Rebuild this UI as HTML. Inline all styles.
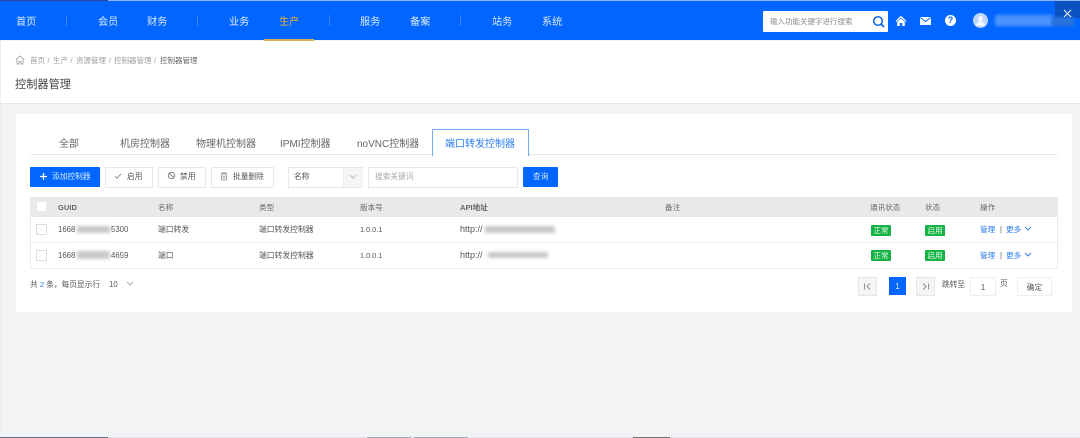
<!DOCTYPE html>
<html lang="zh">
<head>
<meta charset="utf-8">
<title>控制器管理</title>
<style>
html,body{margin:0;padding:0;width:1080px;height:438px;overflow:hidden;background:#f2f3f5}
body{position:relative;font-family:"Liberation Sans","Noto Sans CJK SC",sans-serif;color:#444;filter:blur(.3px)}
.a{position:absolute}
.t{position:absolute;white-space:nowrap;line-height:14px;height:14px}
.nav{color:#dfeaff;font-size:10.2px;top:16px}
.sep{position:absolute;top:15px;width:1px;height:11px;background:#3d86ff}
.crumb{font-size:7.5px;top:54px;color:#9c9c9c}
.tab{font-size:10px;top:138px;color:#666}
.btn{position:absolute;top:167px;height:19px;border:1px solid #e8e8e8;background:#fff;box-sizing:content-box}
.b8{font-size:7.7px;color:#555}
.th{font-size:7.6px;top:202px;color:#666;font-weight:bold}
.td{font-size:7.8px;color:#555}
.cb{position:absolute;left:36px;width:9px;height:9px;border:1px solid #dcdcdc;background:#fff}
.tag{position:absolute;width:20px;height:11px;background:#17b247;border-radius:1px;color:#e8ffe8;font-size:7.5px;line-height:12px;text-align:center}
.lnk{font-size:7.6px;color:#2a7cf0}
.bl{position:absolute;filter:blur(1.5px);background:#c9c9c9}
.pg{position:absolute;top:277px;width:17px;height:17px;border:1px solid #e6e6e6;background:#f5f5f5}
</style>
</head>
<body>
<!-- top strip -->
<div class="a" style="left:0;top:0;width:1080px;height:1px;background:#8db6f5"></div>
<div class="a" style="left:0;top:0;width:108px;height:1px;background:#26479a"></div>

<!-- header -->
<div class="a" style="left:0;top:1px;width:1080px;height:39px;background:#0066ff"></div>
<div class="a" style="left:1055px;top:1px;width:25px;height:17px;background:#0a52c0"></div>
<span class="t nav" style="left:16px">首页</span>
<div class="sep" style="left:66px"></div>
<span class="t nav" style="left:98px">会员</span>
<span class="t nav" style="left:147px">财务</span>
<div class="sep" style="left:197px"></div>
<span class="t nav" style="left:229px">业务</span>
<span class="t nav" style="left:279px;color:#f0b33c">生产</span>
<div class="a" style="left:264px;top:39px;width:50px;height:2px;background:#d8ae4e"></div>
<div class="sep" style="left:329px"></div>
<span class="t nav" style="left:360px">服务</span>
<span class="t nav" style="left:410px">备案</span>
<div class="sep" style="left:460px"></div>
<span class="t nav" style="left:492px">站务</span>
<span class="t nav" style="left:542px">系统</span>

<div class="a" style="left:763px;top:11px;width:125px;height:21px;background:#fff;border-radius:1px"></div>
<span class="t" style="left:770px;top:15px;font-size:7.5px;color:#8a8a8a">输入功能关键字进行搜索</span>
<svg class="a" style="left:872px;top:15px" width="13" height="13" viewBox="0 0 13 13"><circle cx="6" cy="6" r="4.300" fill="none" stroke="#0a66e8" stroke-width="1.500"/><path d="M9 9l3 3" stroke="#0a66e8" stroke-width="1.700"/></svg>
<svg class="a" style="left:895px;top:15px" width="12" height="12" viewBox="0 0 12 12"><path d="M6 .8L.5 6l.8.8L6 2.600l4.700 4.200.8-.8z" fill="#fff"/><path d="M2.200 6.800L6 3.500l3.800 3.300V11H7.200V8H4.800v3H2.200z" fill="#fff"/></svg>
<svg class="a" style="left:920px;top:16px" width="11" height="10" viewBox="0 0 11 10"><rect y="1" width="11" height="8" fill="#f4f8ff"/><path d="M.3 1.500l5.200 4 5.200-4" fill="none" stroke="#0066ff" stroke-width=".9"/></svg>
<div class="a" style="left:945px;top:15px;width:11px;height:11px;border-radius:50%;background:#fff;color:#0066ff;font:bold 9px/11px 'Liberation Sans',sans-serif;text-align:center">?</div>
<div class="a" style="left:973px;top:13px;width:15px;height:15px;border-radius:50%;background:#bcd6fb"></div>
<div class="a" style="left:978px;top:16px;width:5px;height:6px;border-radius:50%;background:#f2f7ff"></div>
<div class="a" style="left:976px;top:22px;width:9px;height:4px;border-radius:4px 4px 1px 1px;background:#f2f7ff"></div>
<div class="a" style="left:995px;top:15px;width:58px;height:11px;background:#4d93fc;filter:blur(1.5px)"></div>
<div class="a" style="left:1052px;top:17px;width:22px;height:9px;background:#2b72dd;filter:blur(1.5px)"></div>
<svg class="a" style="left:1062px;top:8px" width="11" height="11" viewBox="0 0 11 11"><path d="M2 2l7 7M9 2l-7 7" stroke="#e8f0ff" stroke-width="1.100"/></svg>

<!-- breadcrumb band -->
<div class="a" style="left:1px;top:41px;width:1079px;height:62px;background:#fff;border-bottom:1px solid #e6e7ea"></div>
<div class="a" style="left:0;top:41px;width:1px;height:397px;background:#eceef0"></div>
<svg class="a" style="left:15px;top:55px" width="10" height="10" viewBox="0 0 10 10"><path d="M.7 4.800L5 1l4.300 3.800M2 4.500V9h2V6.500h2V9h2V4.500" fill="none" stroke="#aaa" stroke-width=".9"/></svg>
<span class="t crumb" style="left:30px">首页</span>
<span class="t crumb" style="left:47.500px">/</span>
<span class="t crumb" style="left:53px">生产</span>
<span class="t crumb" style="left:70.500px">/</span>
<span class="t crumb" style="left:76px">资源管理</span>
<span class="t crumb" style="left:109px">/</span>
<span class="t crumb" style="left:114px">控制器管理</span>
<span class="t crumb" style="left:154px">/</span>
<span class="t crumb" style="left:160px;color:#666">控制器管理</span>
<span class="t" style="left:15px;top:78px;font-size:11.200px;color:#444">控制器管理</span>

<!-- card -->
<div class="a" style="left:16px;top:114px;width:1056px;height:198px;background:#fff"></div>

<!-- tabs -->
<div class="a" style="left:30px;top:154px;width:1028px;height:1px;background:#e8e8e8"></div>
<span class="t tab" style="left:59px">全部</span>
<span class="t tab" style="left:120px">机房控制器</span>
<span class="t tab" style="left:196px">物理机控制器</span>
<span class="t tab" style="left:280px">IPMI控制器</span>
<span class="t tab" style="left:357px">noVNC控制器</span>
<div class="a" style="left:432px;top:129px;width:95px;height:26px;border:1px solid #76a9f7;border-bottom:0;background:#fff;border-radius:1px 1px 0 0"></div>
<span class="t tab" style="left:445px;color:#2a7cf0">端口转发控制器</span>

<!-- toolbar -->
<div class="a" style="left:30px;top:167px;width:70px;height:20px;background:#0066ff;border-radius:1px"></div>
<svg class="a" style="left:39px;top:172px" width="9" height="9" viewBox="0 0 9 9"><path d="M4.500 1v7M1 4.500h7" stroke="#fff" stroke-width="1.300"/></svg>
<span class="t" style="left:52px;top:170px;font-size:7.700px;color:#d6e6ff">添加控制器</span>

<div class="btn" style="left:105px;width:46px"></div>
<svg class="a" style="left:114px;top:172px" width="8" height="8" viewBox="0 0 8 8"><path d="M1 4.200l2 2L7 1.800" fill="none" stroke="#888" stroke-width=".9"/></svg>
<span class="t b8" style="left:127px;top:170px">启用</span>
<div class="btn" style="left:158px;width:46px"></div>
<svg class="a" style="left:167px;top:171px" width="9" height="9" viewBox="0 0 9 9"><circle cx="4.500" cy="4.500" r="3.200" fill="none" stroke="#777" stroke-width=".9"/><path d="M2.300 2.300l4.400 4.400" stroke="#777" stroke-width=".9"/></svg>
<span class="t b8" style="left:180px;top:170px">禁用</span>
<div class="btn" style="left:211px;width:61px"></div>
<svg class="a" style="left:220px;top:172px" width="8" height="9" viewBox="0 0 8 9"><path d="M.8 1.800h6.400M3 1.800V.8h2v1M1.600 2.500V8h4.800V2.500M3.200 3.500v3M4.800 3.500v3" fill="none" stroke="#888" stroke-width=".8"/></svg>
<span class="t b8" style="left:233px;top:170px">批量删除</span>

<div class="btn" style="left:288px;width:73px"></div>
<div class="a" style="left:343px;top:168px;width:19px;height:19px;background:#f5f5f5;border-left:1px solid #eee"></div>
<span class="t b8" style="left:294px;top:170px">名称</span>
<svg class="a" style="left:349px;top:174px" width="8" height="6" viewBox="0 0 8 6"><path d="M1 1l3 3 3-3" fill="none" stroke="#aaa" stroke-width=".8"/></svg>
<div class="btn" style="left:368px;width:148px"></div>
<span class="t" style="left:375px;top:170px;font-size:7.700px;color:#aaa">搜索关键词</span>
<div class="a" style="left:523px;top:167px;width:35px;height:20px;background:#0066ff;border-radius:1px"></div>
<span class="t" style="left:533px;top:170px;font-size:7.700px;color:#d6e6ff">查询</span>

<!-- table -->
<div class="a" style="left:30px;top:197px;width:1028px;height:72px;background:#fff;border:0;box-shadow:inset 0 0 0 1px #ececec"></div>
<div class="a" style="left:30px;top:197px;width:1028px;height:20px;background:#e8e9eb"></div>
<div class="a" style="left:31px;top:242px;width:1026px;height:1px;background:#efefef"></div>
<div class="cb" style="top:202px;width:9px;height:9px;border:0;left:36.500px"></div>
<span class="t th" style="left:58px;top:201px">GUID</span>
<span class="t th" style="left:158px;top:201px;font-weight:normal">名称</span>
<span class="t th" style="left:259px;top:201px;font-weight:normal">类型</span>
<span class="t th" style="left:360px;top:201px;font-weight:normal">版本号</span>
<span class="t th" style="left:460px;top:201px">API地址</span>
<span class="t th" style="left:665px;top:201px;font-weight:normal">备注</span>
<span class="t th" style="left:870px;top:201px;font-weight:normal">通讯状态</span>
<span class="t th" style="left:925px;top:201px;font-weight:normal">状态</span>
<span class="t th" style="left:980px;top:201px;font-weight:normal">操作</span>

<div class="cb" style="top:224px"></div>
<span class="t td" style="left:58px;top:223px">1668</span>
<div class="bl" style="left:77px;top:226px;width:33px;height:7px"></div>
<span class="t td" style="left:111px;top:223px">5300</span>
<span class="t td" style="left:158px;top:223px">端口转发</span>
<span class="t td" style="left:259px;top:223px">端口转发控制器</span>
<span class="t td" style="left:360px;top:223px;font-size:7.300px">1.0.0.1</span>
<span class="t td" style="left:460px;top:222px;font-size:9px">http://</span>
<div class="bl" style="left:485px;top:226px;width:70px;height:7px"></div>
<div class="tag" style="left:871px;top:225px">正常</div>
<div class="tag" style="left:925px;top:225px">启用</div>
<span class="t lnk" style="left:980px;top:223px">管理</span>
<span class="t td" style="left:1000px;top:223px;color:#666">|</span>
<span class="t lnk" style="left:1006px;top:223px">更多</span>
<svg class="a" style="left:1024px;top:226px" width="8" height="6" viewBox="0 0 8 6"><path d="M1 1l3 3 3-3" fill="none" stroke="#2a7cf0" stroke-width=".9"/></svg>

<div class="cb" style="top:250px"></div>
<span class="t td" style="left:58px;top:249px">1668</span>
<div class="bl" style="left:77px;top:251px;width:33px;height:8px"></div>
<span class="t td" style="left:111px;top:249px">4659</span>
<span class="t td" style="left:158px;top:249px">端口</span>
<span class="t td" style="left:259px;top:249px">端口转发控制器</span>
<span class="t td" style="left:360px;top:249px;font-size:7.300px">1.0.0.1</span>
<span class="t td" style="left:460px;top:248px;font-size:9px">http://</span>
<div class="bl" style="left:488px;top:252px;width:60px;height:6px"></div>
<div class="tag" style="left:871px;top:250px">正常</div>
<div class="tag" style="left:925px;top:250px">启用</div>
<span class="t lnk" style="left:980px;top:249px">管理</span>
<span class="t td" style="left:1000px;top:249px;color:#666">|</span>
<span class="t lnk" style="left:1006px;top:249px">更多</span>
<svg class="a" style="left:1024px;top:252px" width="8" height="6" viewBox="0 0 8 6"><path d="M1 1l3 3 3-3" fill="none" stroke="#2a7cf0" stroke-width=".9"/></svg>

<!-- footer of table -->
<span class="t td" style="left:30px;top:278px;font-size:7.700px">共 <span style="color:#2a7cf0">2</span> 条，每页显示行</span>
<span class="t td" style="left:109px;top:278px">10</span>
<svg class="a" style="left:126px;top:281px" width="8" height="6" viewBox="0 0 8 6"><path d="M1 1l3 3 3-3" fill="none" stroke="#999" stroke-width=".8"/></svg>

<div class="pg" style="left:858px"></div>
<svg class="a" style="left:863px;top:282px" width="9" height="9" viewBox="0 0 9 9"><path d="M1.500 1.500v6M7 1.500L4 4.500l3 3" fill="none" stroke="#888" stroke-width=".9"/></svg>
<div class="a" style="left:889px;top:277px;width:17px;height:18px;background:#0066ff;color:#e6f0ff;font-size:7.800px;line-height:20px;text-align:center">1</div>
<div class="pg" style="left:916px"></div>
<svg class="a" style="left:921px;top:282px" width="9" height="9" viewBox="0 0 9 9"><path d="M7.500 1.500v6M2 1.500l3 3-3 3" fill="none" stroke="#888" stroke-width=".9"/></svg>
<span class="t td" style="left:942px;top:278px;font-size:7.700px">跳转至</span>
<div class="a" style="left:970px;top:277px;width:24px;height:17px;border:1px solid #eee;background:#fff;font-size:7.800px;line-height:19px;text-align:center;color:#555">1</div>
<span class="t td" style="left:1000px;top:277px;font-size:7.700px">页</span>
<div class="a" style="left:1017px;top:277px;width:33px;height:17px;border:1px solid #eee;background:#fff;font-size:7.700px;line-height:20px;text-align:center;color:#555">确定</div>

<!-- bottom strip -->
<div class="a" style="left:0;top:437px;width:1080px;height:1px;background:#e3e4e8"></div>
<div class="a" style="left:0;top:437px;width:108px;height:1px;background:#6c7080"></div>
<div class="a" style="left:367px;top:437px;width:44px;height:1px;background:#a3a6b3"></div>
<div class="a" style="left:414px;top:437px;width:54px;height:1px;background:#a3a6b3"></div>
<div class="a" style="left:633px;top:437px;width:37px;height:1px;background:#777"></div>
</body>
</html>
